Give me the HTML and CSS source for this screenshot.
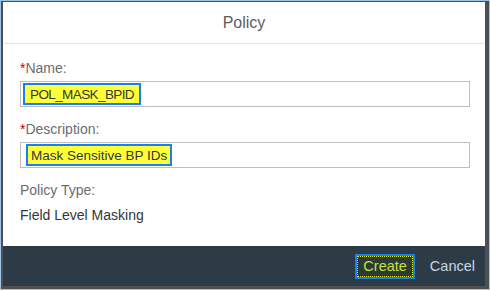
FILE: index.html
```html
<!DOCTYPE html>
<html lang="en">
<head>
  <meta charset="UTF-8">
  <meta name="viewport" content="width=device-width, initial-scale=1.0">
  <title>Policy</title>
  <link rel="stylesheet" href="styles.css">
</head>
<body>
  <div class="screen">
    <div class="dialog">
      <div class="dialog-header">Policy</div>

      <div class="dialog-content">
        <div class="form-group">
          <label class="field-label"><span class="req">*</span>Name:</label>
          <div class="field-input">
            <span class="mark mark-caps">POL_MASK_BPID</span>
          </div>
        </div>

        <div class="form-group">
          <label class="field-label"><span class="req">*</span>Description:</label>
          <div class="field-input field-input-wide">
            <span class="mark">Mask Sensitive BP IDs</span>
          </div>
        </div>

        <div class="form-group">
          <label class="field-label">Policy Type:</label>
          <div class="field-text">Field Level Masking</div>
        </div>
      </div>

      <div class="dialog-footer">
        <button class="btn btn-create">Create</button>
        <button class="btn btn-cancel">Cancel</button>
      </div>
    </div>
  </div>
</body>
</html>
```

FILE: styles.css
```css
body {
  margin: 0;
  background: #fff;
  font-family: "Liberation Sans", Arial, sans-serif;
  color: #32363a;
}

.screen {
  width: 490px;
  height: 290px;
  box-sizing: border-box;
  border: 1px solid #9cc3ea;
  display: flex;
}

.dialog {
  flex: 1;
  display: flex;
  flex-direction: column;
  background: #fff;
  border-style: solid;
  border-color: #4f4f4f;
  border-width: 1px 4px 3px 2px;
}

.dialog-header {
  height: 41px;
  border-bottom: 1px solid #e5e5e5;
  display: flex;
  align-items: center;
  justify-content: center;
  font-size: 16px;
  color: #5a5d60;
}

.dialog-content {
  flex: 1;
  padding: 16px 15px 0 17px;
}

.form-group {
  margin-bottom: 14px;
}

.field-label {
  display: block;
  font-size: 14px;
  line-height: 16px;
  color: #6a6d70;
  margin-bottom: 5px;
}

.req {
  color: #bb0000;
}

.field-input {
  height: 26px;
  box-sizing: border-box;
  border: 1px solid #bfbfbf;
  padding: 1px 2px;
  display: flex;
  align-items: stretch;
}

.field-input-wide {
  padding-left: 5px;
}

.mark {
  display: flex;
  align-items: center;
  background: #ffff3a;
  border: 2px solid #1a7ff0;
  padding: 0 3px;
  font-size: 13.5px;
  color: #32363a;
}

.mark-caps {
  font-size: 13.5px;
  letter-spacing: -0.6px;
  padding: 0 5px;
}

.field-text {
  font-size: 14px;
  line-height: 16px;
  margin-top: 9px;
  color: #32363a;
}

.dialog-footer {
  height: 40px;
  background: #2d3b47;
  display: flex;
  align-items: center;
  justify-content: flex-end;
  gap: 15px;
  padding-right: 10px;
}

.btn {
  font-family: "Liberation Sans", Arial, sans-serif;
  font-size: 14.5px;
  border: none;
  background: none;
  cursor: pointer;
}

.btn-create {
  height: 25px;
  padding: 0 6px;
  color: #c9e03a;
  background: #2b3a33;
  border: 2px solid #1a7ff0;
  outline: 1px dotted #e8e82a;
  outline-offset: -3px;
}

.btn-cancel {
  color: #c5d6e6;
  padding: 0;
}
```
